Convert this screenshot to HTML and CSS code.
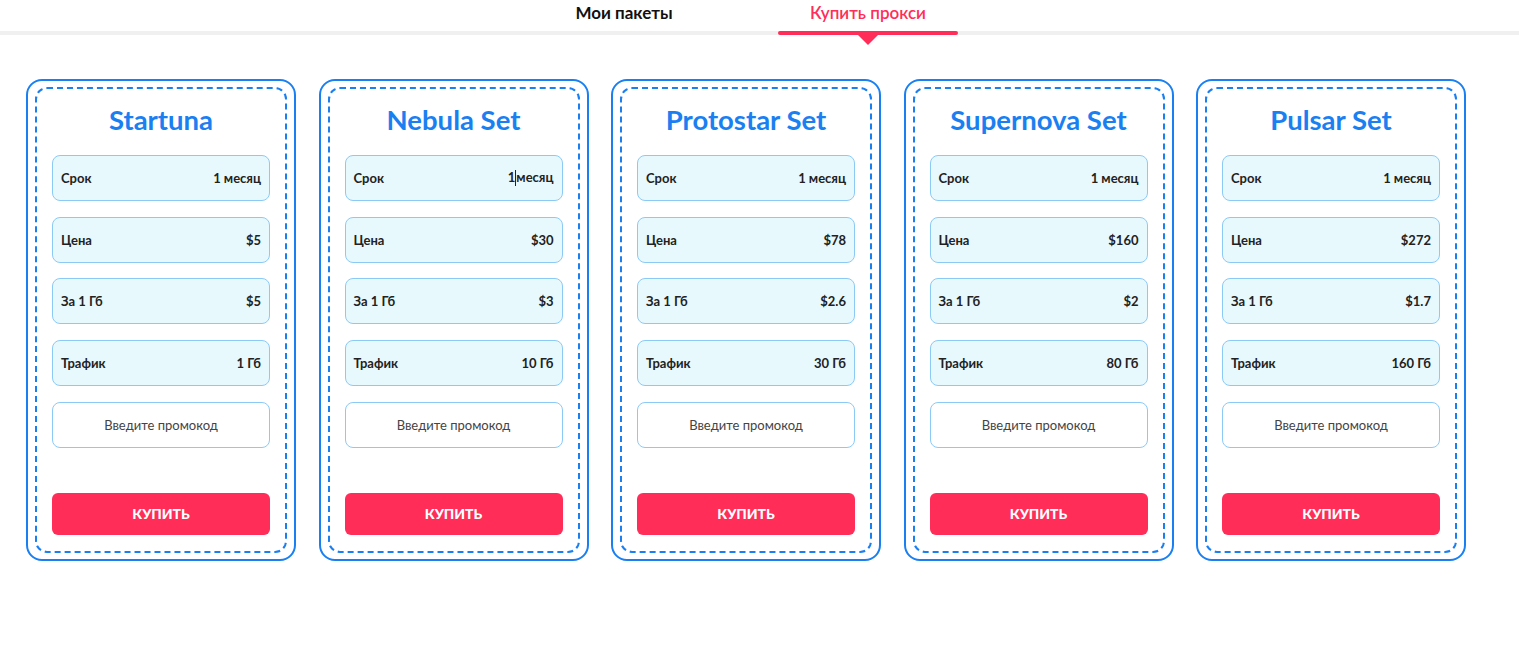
FILE: index.html
```html
<!DOCTYPE html>
<html>
<head>
    <meta charset="UTF-8">
    <title>Купить прокси</title>
    <link rel="stylesheet" href="styles.css">
</head>
<body>
    <div class="tabs">
        <div class="tab">Мои пакеты</div>
        <div class="tab active">Купить прокси</div>
    </div>

    <div class="packages">
        <div class="card">
            <div class="card-inner">
                <h2>Startuna</h2>
                <div class="row"><span>Срок</span><span>1 месяц</span></div>
                <div class="row"><span>Цена</span><span>$5</span></div>
                <div class="row"><span>За 1 Гб</span><span>$5</span></div>
                <div class="row"><span>Трафик</span><span>1 Гб</span></div>
                <input class="promo" type="text" placeholder="Введите промокод">
                <button class="buy">КУПИТЬ</button>
            </div>
        </div>
        <div class="card">
            <div class="card-inner">
                <h2>Nebula Set</h2>
                <div class="row"><span>Срок</span><span>1<i class="caret"></i>месяц</span></div>
                <div class="row"><span>Цена</span><span>$30</span></div>
                <div class="row"><span>За 1 Гб</span><span>$3</span></div>
                <div class="row"><span>Трафик</span><span>10 Гб</span></div>
                <input class="promo" type="text" placeholder="Введите промокод">
                <button class="buy">КУПИТЬ</button>
            </div>
        </div>
        <div class="card">
            <div class="card-inner">
                <h2>Protostar Set</h2>
                <div class="row"><span>Срок</span><span>1 месяц</span></div>
                <div class="row"><span>Цена</span><span>$78</span></div>
                <div class="row"><span>За 1 Гб</span><span>$2.6</span></div>
                <div class="row"><span>Трафик</span><span>30 Гб</span></div>
                <input class="promo" type="text" placeholder="Введите промокод">
                <button class="buy">КУПИТЬ</button>
            </div>
        </div>
        <div class="card">
            <div class="card-inner">
                <h2>Supernova Set</h2>
                <div class="row"><span>Срок</span><span>1 месяц</span></div>
                <div class="row"><span>Цена</span><span>$160</span></div>
                <div class="row"><span>За 1 Гб</span><span>$2</span></div>
                <div class="row"><span>Трафик</span><span>80 Гб</span></div>
                <input class="promo" type="text" placeholder="Введите промокод">
                <button class="buy">КУПИТЬ</button>
            </div>
        </div>
        <div class="card">
            <div class="card-inner">
                <h2>Pulsar Set</h2>
                <div class="row"><span>Срок</span><span>1 месяц</span></div>
                <div class="row"><span>Цена</span><span>$272</span></div>
                <div class="row"><span>За 1 Гб</span><span>$1.7</span></div>
                <div class="row"><span>Трафик</span><span>160 Гб</span></div>
                <input class="promo" type="text" placeholder="Введите промокод">
                <button class="buy">КУПИТЬ</button>
            </div>
        </div>
    </div>
</body>
</html>
```

FILE: styles.css
```css
body {
    margin: 0;
    font-family: Lato, 'Open Sans', sans-serif;
    background: #fff;
    color: #222;
}
.tabs {
    display: flex;
    gap: 64px;
    padding-left: 534px;
    border-bottom: 4px solid #f0f0f0;
    height: 31px;
}
.tab {
    width: 180px;
    text-align: center;
    font-size: 17px;
    font-weight: 700;
    line-height: 26px;
    color: #111;
    position: relative;
}
.tab.active {
    color: #ff2d58;
    font-weight: 600;
}
.tab.active::after {
    content: '';
    position: absolute;
    left: 0;
    right: 0;
    bottom: -4px;
    height: 4px;
    border-radius: 2px;
    background: #ff2d58;
}
.tab.active::before {
    content: '';
    position: absolute;
    left: 80px;
    bottom: -14px;
    border-left: 10px solid transparent;
    border-right: 10px solid transparent;
    border-top: 10px solid #ff2d58;
}
.packages {
    display: grid;
    grid-template-columns: repeat(5, 270px);
    column-gap: 22.5px;
    padding: 44px 0 0 26px;
}
.card {
    border: 2px solid #1a80f2;
    border-radius: 16px;
    padding: 6px 7px;
}
.card-inner {
    border: 2px dashed #1a80f2;
    border-radius: 12px;
    padding: 15px 15px 16px;
    display: flex;
    flex-direction: column;
    gap: 15.75px;
}
.card-inner h2 {
    margin: 0 0 3px;
    text-align: center;
    font-size: 27.5px;
    line-height: 32px;
    font-weight: 700;
    color: #1a80f2;
}
.row {
    display: flex;
    justify-content: space-between;
    align-items: center;
    height: 44px;
    padding: 0 8px;
    border: 1px solid #8ccaf6;
    border-radius: 8px;
    background: #e8f9fe;
    font-size: 13px;
    font-weight: 700;
    color: #222;
}
.caret {
    display: inline-block;
    width: 1px;
    height: 16px;
    background: #222;
    vertical-align: -4px;
}
.promo {
    height: 46px;
    box-sizing: border-box;
    border: 1px solid #8ccaf6;
    border-radius: 8px;
    background: #fff;
    text-align: center;
    font-family: inherit;
    font-size: 13px;
    outline: none;
}
.promo::placeholder {
    color: #444;
}
.buy {
    margin-top: 29px;
    height: 42px;
    border: none;
    border-radius: 6px;
    background: #ff2d58;
    color: #fff;
    font-family: inherit;
    font-size: 14px;
    font-weight: 900;
    cursor: pointer;
}
```
